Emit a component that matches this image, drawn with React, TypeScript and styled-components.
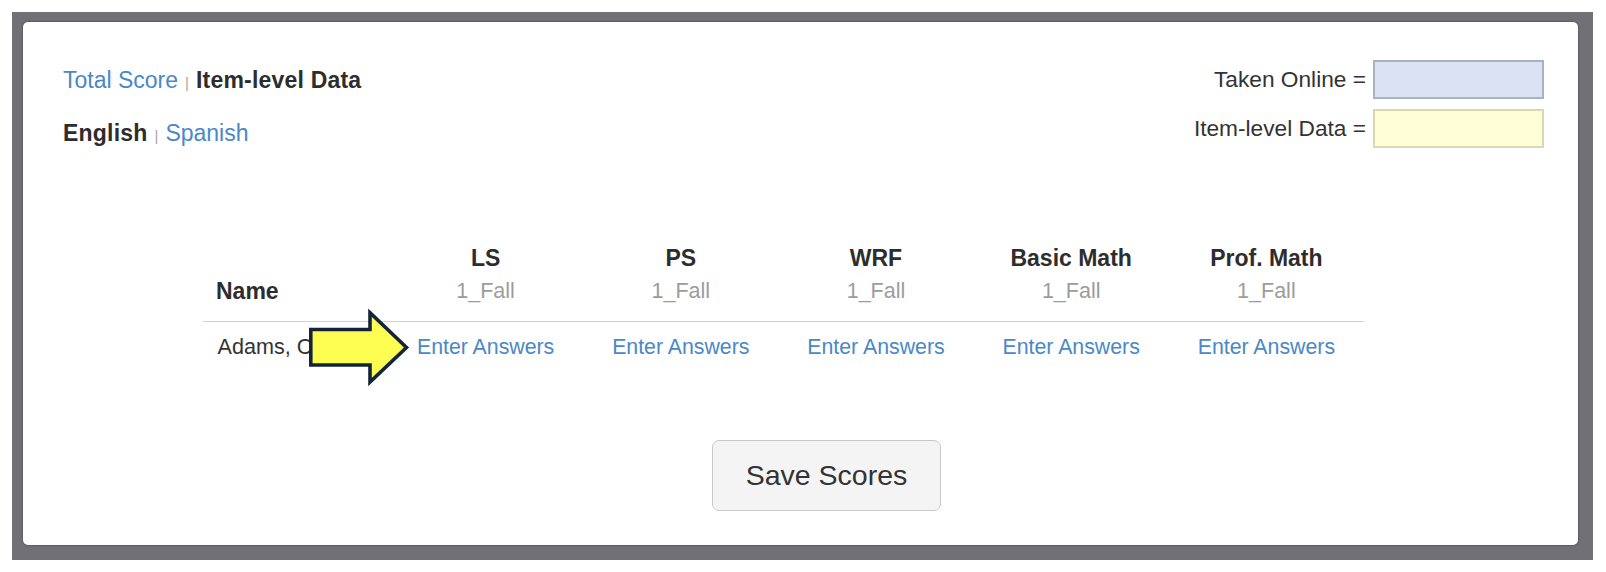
import styled, { createGlobalStyle } from "styled-components";

const GlobalStyle = createGlobalStyle`
  html, body {
    margin: 0;
    padding: 0;
    background: #fff;
  }
  body {
    font-family: "Liberation Sans", Arial, Helvetica, sans-serif;
    color: #333;
  }
`;

const subjects = ["LS", "PS", "WRF", "Basic Math", "Prof. Math"];

const S = {
  // grey backdrop around the panel
  Frame: styled.div`
    margin: 12px;
    width: 1581px;
    height: 548px;
    box-sizing: border-box;
    padding: 10px 15px 15px 11px;
    background: #717175;
  `,
  Card: styled.div`
    position: relative;
    height: 523px;
    box-sizing: border-box;
    padding: 38px 34px 0 40px;
    background: #fff;
    border-radius: 5px;
    box-shadow: 0 0 2px rgba(0, 0, 0, 0.55);
  `,
  TopRow: styled.div`
    display: flex;
    justify-content: space-between;
    align-items: flex-start;
  `,
  Switches: styled.div`
    display: flex;
    flex-direction: column;
    gap: 12.5px;
  `,
  SwitchLine: styled.div`
    height: 40px;
    line-height: 40px;
    font-size: 23px;
    white-space: nowrap;
  `,
  Link: styled.a`
    color: #4a88c7;
    text-decoration: none;
    cursor: pointer;
  `,
  Current: styled.span`
    color: #2d2d2d;
    font-weight: bold;
    letter-spacing: 0.2px;
  `,
  Sep: styled.span`
    font-size: 15px;
    color: #a5a5a5;
    margin: 0 7px;
  `,
  Legend: styled.div`
    display: flex;
    flex-direction: column;
    gap: 10px;
  `,
  LegendRow: styled.div`
    display: flex;
    align-items: center;
    justify-content: flex-end;
    gap: 7px;
    font-size: 22.7px;
    color: #333;
  `,
  Swatch: styled.div<{ $fill: string; $edge: string }>`
    width: 171px;
    height: 39px;
    box-sizing: border-box;
    background: ${(p) => p.$fill};
    border: 2px solid ${(p) => p.$edge};
  `,
  Table: styled.table`
    margin: 81px 0 0 140px;
    width: 1161px;
    border-collapse: collapse;
    table-layout: fixed;
  `,
  Head: styled.th<{ $left?: boolean }>`
    padding: 8px 0 13.5px ${(p) => (p.$left ? "13px" : "0")};
    text-align: ${(p) => (p.$left ? "left" : "center")};
    vertical-align: bottom;
    font-size: 23px;
    line-height: 33px;
    font-weight: bold;
    color: #2d2d2d;
    border-bottom: 1px solid #d2d2d2;
    white-space: nowrap;
  `,
  Sub: styled.span`
    display: block;
    font-size: 21.5px;
    font-weight: normal;
    color: #9c9c9c;
  `,
  Cell: styled.td<{ $left?: boolean }>`
    padding: 10px 0 10px ${(p) => (p.$left ? "14.5px" : "0")};
    text-align: ${(p) => (p.$left ? "left" : "center")};
    font-size: ${(p) => (p.$left ? "21.6px" : "21.3px")};
    line-height: 30px;
    color: #333;
    white-space: nowrap;
    overflow: hidden;
  `,
  ButtonRow: styled.div`
    margin-top: 68px;
    padding-left: 649px;
  `,
  SaveButton: styled.button`
    width: 229px;
    height: 71px;
    font-family: inherit;
    font-size: 28.5px;
    color: #333;
    background: #f4f4f4;
    border: 1px solid #c9c9c9;
    border-radius: 7px;
    cursor: pointer;
  `,
  // call-out arrow laid over the table
  Arrow: styled.svg`
    position: absolute;
    left: 286px;
    top: 287px;
    overflow: visible;
  `,
};

const App = () => (
  <>
    <GlobalStyle />
    <S.Frame>
      <S.Card>
        <S.TopRow>
          <S.Switches>
            <S.SwitchLine>
              <S.Link>Total Score</S.Link>
              <S.Sep>|</S.Sep>
              <S.Current>Item-level Data</S.Current>
            </S.SwitchLine>
            <S.SwitchLine>
              <S.Current>English</S.Current>
              <S.Sep>|</S.Sep>
              <S.Link>Spanish</S.Link>
            </S.SwitchLine>
          </S.Switches>
          <S.Legend>
            <S.LegendRow>
              Taken Online =<S.Swatch $fill="#dbe2f3" $edge="#a9b1c5" />
            </S.LegendRow>
            <S.LegendRow>
              Item-level Data =<S.Swatch $fill="#fefdd5" $edge="#dadab0" />
            </S.LegendRow>
          </S.Legend>
        </S.TopRow>

        <S.Table>
          <colgroup>
            <col style={{ width: 185 }} />
            {subjects.map((s) => (
              <col key={s} />
            ))}
          </colgroup>
          <thead>
            <tr>
              <S.Head $left>Name</S.Head>
              {subjects.map((s) => (
                <S.Head key={s}>
                  {s}
                  <S.Sub>1_Fall</S.Sub>
                </S.Head>
              ))}
            </tr>
          </thead>
          <tbody>
            <tr>
              <S.Cell $left>Adams, C</S.Cell>
              {subjects.map((s) => (
                <S.Cell key={s}>
                  <S.Link>Enter Answers</S.Link>
                </S.Cell>
              ))}
            </tr>
          </tbody>
        </S.Table>

        <S.ButtonRow>
          <S.SaveButton>Save Scores</S.SaveButton>
        </S.ButtonRow>

        <S.Arrow width="100" height="77" viewBox="0 0 100 77">
          <polygon
            points="1.8,20.5 61,20.5 61,3.8 97.5,38.5 61,73 61,56 1.8,56"
            fill="#fdfd52"
            stroke="#14253a"
            strokeWidth="3.6"
            strokeLinejoin="miter"
          />
        </S.Arrow>
      </S.Card>
    </S.Frame>
  </>
);

export default App;
